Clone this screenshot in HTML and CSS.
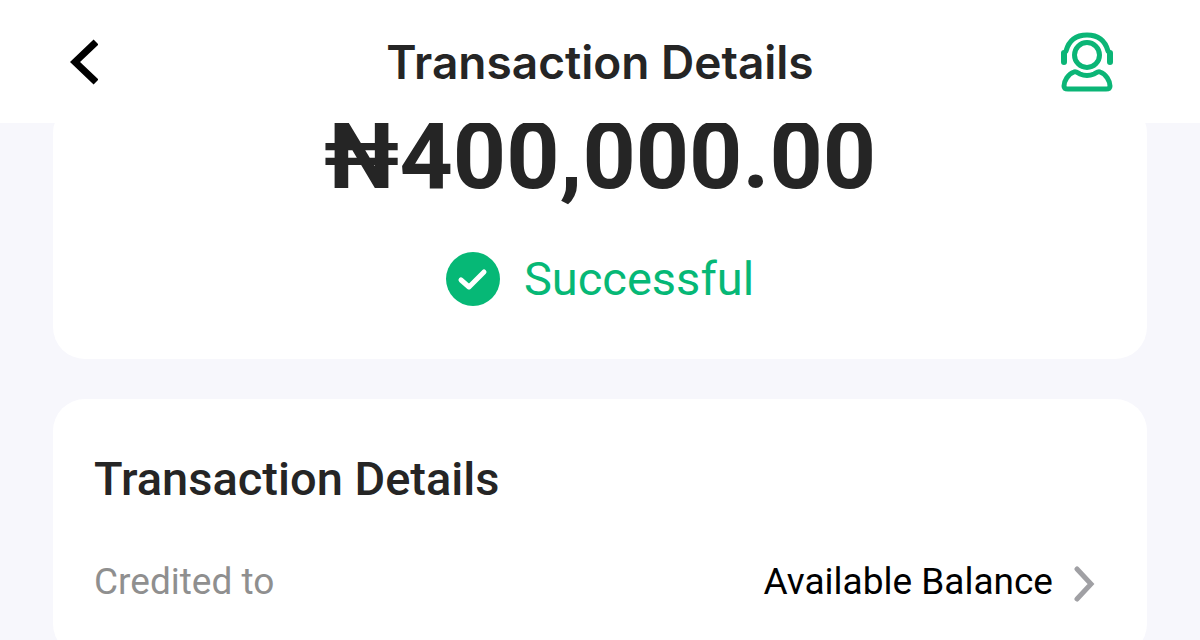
FILE: index.html
```html
<!DOCTYPE html>
<html lang="en">
<head>
<meta charset="utf-8">
<meta name="viewport" content="width=device-width, initial-scale=1">
<title>Transaction Details</title>
<link rel="stylesheet" href="styles.css">
</head>
<body>
<header class="topbar">
  <button class="icon-button" type="button" aria-label="Back">
    <svg class="back-icon" viewBox="0 0 28 46" fill="none" stroke="#000" stroke-width="7"><path d="M26 3 5 23l21 20"/></svg>
  </button>
  <h1 class="title">Transaction Details</h1>
  <button class="icon-button support" type="button" aria-label="Customer support">
    <svg class="support-icon" viewBox="0 0 54 62" fill="none" stroke="#0bb576" stroke-width="5" stroke-linecap="round" stroke-linejoin="round"><circle cx="27" cy="24" r="12.500"/><path d="M6 20C9 9 17 4 27 4s18 5 21 16"/><path d="M4 22v9M50 22v9" stroke-width="6"/><path d="M14 41C16 40 18 42 20 43Q27 46 34 43C36 42 38 40 40 41C46 43 50 50 50 55Q50 58 46 58H8Q4 58 4 55C4 50 8 43 14 41Z"/></svg>
  </button>
</header>
<main class="content">
  <section class="card summary">
    <p class="amount">₦400,000.00</p>
    <p class="status">
      <svg class="status-icon" viewBox="0 0 54 54" fill="none"><circle cx="27" cy="27" r="27" fill="#06b876"/><path d="m15 28 8 7 15-15" stroke="#fff" stroke-width="5" stroke-linecap="round" stroke-linejoin="round"/></svg>
      <span>Successful</span>
    </p>
  </section>
  <section class="card details">
    <h2 class="heading">Transaction Details</h2>
    <div class="row">
      <span class="label">Credited to</span>
      <a class="value" href="#balance">Available Balance
        <svg class="chevron" viewBox="0 0 22 36" fill="none" stroke="#a0a0a4" stroke-width="5" stroke-linecap="round"><path d="m4 3 14 15L4 33"/></svg>
      </a>
    </div>
  </section>
</main>
</body>
</html>
```
FILE: styles.css
```css
* { box-sizing: border-box; }
body { margin: 0; background: #f7f7fc; color: #252525; font-family: Roboto, "Noto Sans", sans-serif; }
h1, h2, p { margin: 0; }
.topbar { position: sticky; top: 0; z-index: 1; display: grid; grid-template-columns: 1fr auto 1fr; align-items: center; padding: 34px 70px 33px; background: #fff; }
.icon-button { display: flex; align-items: center; justify-self: start; height: 56px; padding: 0; border: 0; background: none; }
.support { justify-self: end; margin-right: 16px; }
.back-icon { flex: none; width: 28px; height: 46px; }
.support-icon { flex: none; width: 54px; height: 62px; }
.title { font-family: Inter, sans-serif; font-size: 46px; font-weight: 600; line-height: 56px; }
.content { display: flex; flex-direction: column; gap: 40px; padding: 0 53px; }
.card { background: #fff; border-radius: 32px; }
.summary { display: flex; flex-direction: column; align-items: center; gap: 38px; margin-top: -22px; padding-bottom: 52px; }
.amount { font-size: 93px; font-weight: 700; line-height: 112px; }
.status { display: flex; align-items: center; gap: 24px; color: #06b876; font-size: 47px; line-height: 56px; }
.status-icon { width: 54px; height: 54px; }
.details { padding: 52px 52px 52px 41px; }
.heading { font-size: 47px; font-weight: 500; line-height: 56px; }
.row { display: flex; align-items: center; justify-content: space-between; margin-top: 53px; font-size: 37px; line-height: 44px; }
.label { color: #8f8f8f; }
.value { display: flex; align-items: center; gap: 20px; color: #000; text-decoration: none; }
.chevron { width: 22px; height: 36px; margin-top: 4px; }
```
